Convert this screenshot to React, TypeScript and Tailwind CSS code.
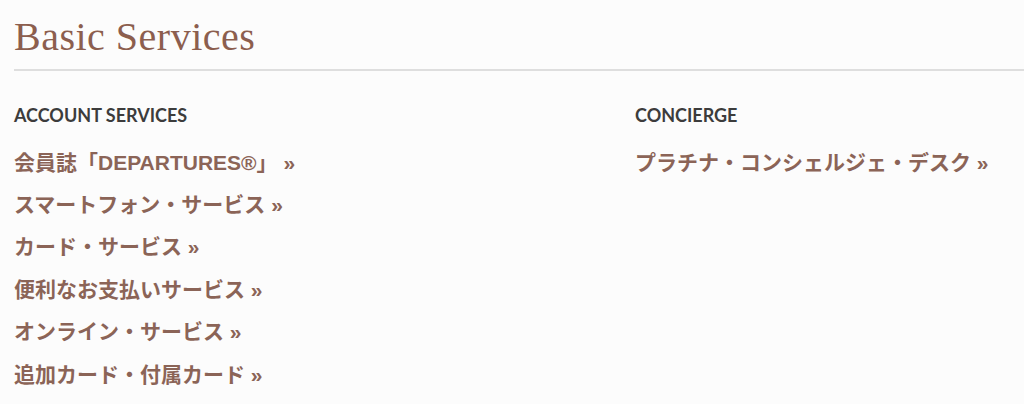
import React from "react";

const accountLinks = [
  "会員誌「DEPARTURES®」",
  "スマートフォン・サービス",
  "カード・サービス",
  "便利なお支払いサービス",
  "オンライン・サービス",
  "追加カード・付属カード",
];

const conciergeLinks = ["プラチナ・コンシェルジェ・デスク"];

const ServiceLink: React.FC<{ label: string }> = ({ label }) => (
  <li className="h-[42.4px] flex items-center">
    <a href="#" className="font-bold text-[21px] leading-none text-[#8b6457] whitespace-nowrap">
      {label} »
    </a>
  </li>
);

const Column: React.FC<{ title: string; links: string[] }> = ({ title, links }) => (
  <div>
    <h3 className="text-[18px] leading-none font-bold text-[#3c3c3c] font-['Lato','Liberation_Sans',sans-serif]">
      {title}
    </h3>
    <ul className="mt-[17px]">
      {links.map((l) => (
        <ServiceLink key={l} label={l} />
      ))}
    </ul>
  </div>
);

export default function App() {
  return (
    <div className="w-[1024px] h-[404px] bg-[#fcfcfc] pl-[14px] overflow-hidden font-['Liberation_Sans','Noto_Sans_CJK_JP',sans-serif]">
      <h2 className="pt-[17px] pb-[12px] text-[40px] leading-[40px] tracking-[0.5px] text-[#8c5e4e] font-['Liberation_Serif',serif]">
        Basic Services
      </h2>
      <div className="h-[2px] bg-[#dedede]" />
      <div className="grid grid-cols-[621px_1fr] pt-[35px]">
        <Column title="ACCOUNT SERVICES" links={accountLinks} />
        <Column title="CONCIERGE" links={conciergeLinks} />
      </div>
    </div>
  );
}
